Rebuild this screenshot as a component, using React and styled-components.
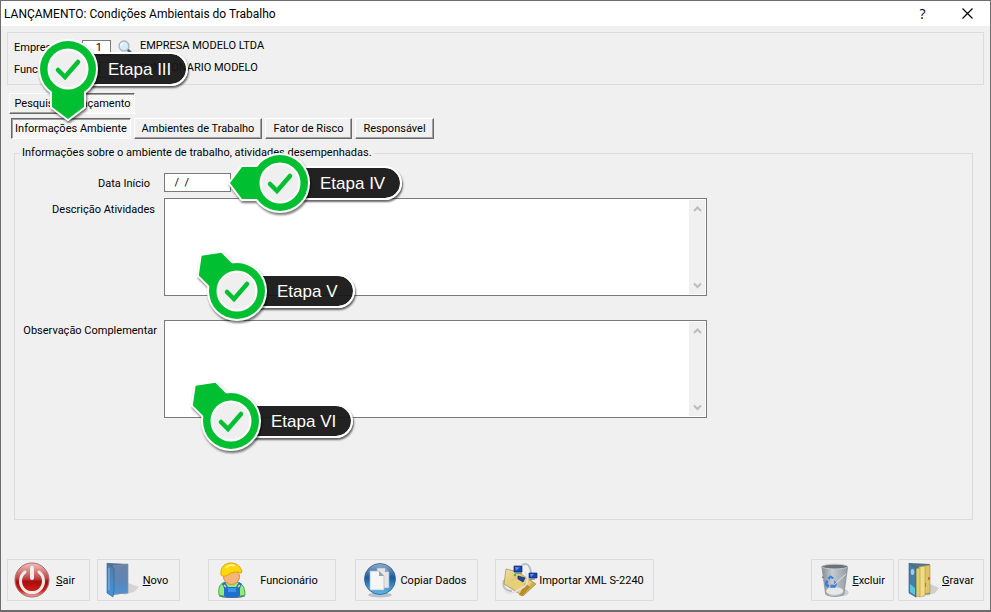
import React from 'react'
import styled, { createGlobalStyle, css } from 'styled-components'

const GlobalStyle = createGlobalStyle`
  * {
    box-sizing: border-box;
  }
  body {
    margin: 0;
    background-color: #6e6c6d;
    color: #000;
    font-family: Tahoma, Roboto, sans-serif;
    font-size: 11px;
    line-height: 14px;
  }
  button, input, textarea {
    font: inherit;
    color: inherit;
  }
`

const Window = styled.div`
  position: relative;
  display: flex;
  flex-direction: column;
  min-height: 100vh;
  border: 1px solid #6e6c6d;
  border-bottom-width: 2px;
  background-color: #f0f0f0;
`

const TitleBar = styled.header`
  display: flex;
  align-items: center;
  justify-content: space-between;
  height: 25px;
  padding-left: 3px;
  background-color: white;
`

const Title = styled.h1`
  margin: 0;
  font-family: "Segoe UI", Roboto, sans-serif;
  font-size: 12px;
  font-weight: 400;
`

const TitleActions = styled.div`
  display: flex;
`

const TitleButton = styled.button`
  display: flex;
  align-items: center;
  justify-content: center;
  width: 45px;
  height: 25px;
  padding: 0;
  border: none;
  background: none;
  font-family: "Segoe UI", "Open Sans", sans-serif;
  font-size: 14px;
`

const Content = styled.main`
  flex: 1;
  display: flex;
  flex-direction: column;
  padding: 6px 6px 0px;
`

const Summary = styled.section`
  display: flex;
  flex-direction: column;
  gap: 5px;
  height: 53px;
  padding: 6px 6px 0px;
  border: 1px solid #dcdcdc;
`

const SummaryRow = styled.div`
  display: flex;
  align-items: center;
  height: 17px;
`

const SummaryLabel = styled.label`
  width: 68px;
`

const SummaryName = styled.span`
  align-self: flex-start;
`

const CodeInput = styled.input`
  width: 29px;
  height: 16px;
  padding: 0px 8px 0px 0px;
  border: 1px solid #7a7a7a;
  background-color: white;
  text-align: right;
`

const SearchButton = styled.button`
  display: flex;
  width: 16px;
  height: 16px;
  margin: 0px 6px 0px 7px;
  padding: 0;
  border: none;
  background: none;
`

const Tabs = styled.nav`
  display: flex;
  align-items: flex-end;
  gap: ${ props => props.$gap };
  margin: ${ props => props.$margin };
`

const selectedTab = css`
  border-color: #696969 white white #696969;
  background: repeating-conic-gradient(#ffffff 0% 25%, #f0f0f0 0% 50%) 0px 0px / 2px 2px;
  box-shadow: inset 1px 1px 0px #a0a0a0;
`

const Tab = styled.button`
  height: 21px;
  width: ${ props => props.$width };
  padding: 0;
  border: 1px solid;
  border-color: white #696969 #696969 white;
  background-color: #f0f0f0;
  box-shadow: inset -1px -1px 0px #a0a0a0;
  white-space: nowrap;
  ${ props => props.$selected && selectedTab }
`

const Group = styled.fieldset`
  flex: 1;
  min-width: 0;
  margin: 7px 11px 0px 7px;
  padding: 13px 0px 0px;
  border: 1px solid #dcdcdc;
`

const Legend = styled.legend`
  margin-left: 5px;
  padding: 0px 2px;
`

const Field = styled.div`
  display: flex;
  align-items: flex-start;
  margin-bottom: ${ props => props.$space || '0px' };
`

const FieldLabel = styled.label`
  width: 149px;
  padding: ${ props => props.$pad || '5px 9px 0px 0px' };
  text-align: right;
  white-space: nowrap;
`

const DateInput = styled.input`
  width: 67px;
  height: 19px;
  padding: 0px 4px;
  border: 1px solid #7a7a7a;
  background-color: white;
  white-space: pre;
`

const MemoBox = styled.div`
  flex: 0 1 543px;
  display: flex;
  height: 98px;
  padding: 1px;
  border: 1px solid #7a7a7a;
  background-color: white;
`

const Memo = styled.textarea`
  flex: 1;
  border: none;
  outline: none;
  resize: none;
  overflow: hidden;
`

const ScrollBar = styled.div`
  display: flex;
  flex-direction: column;
  justify-content: space-between;
  align-items: center;
  width: 16px;
  padding: 5px 0px 4px;
  background-color: #f0f0f0;
`

const Footer = styled.footer`
  display: flex;
  padding: 39px 6px 9px;
`

const ActionButton = styled.button`
  display: flex;
  align-items: center;
  width: ${ props => props.$width };
  height: 42px;
  margin-left: ${ props => props.$before || '0px' };
  padding: 0px 8px 0px 6px;
  border: 1px solid #dcdcdc;
  background-color: #f0f0f0;
  white-space: nowrap;
`

const ActionText = styled.span`
  flex: 1;
  padding-top: 2px;
  text-align: center;
`

const Callout = styled.div`
  position: absolute;
  left: ${ props => props.$x }px;
  top: ${ props => props.$y }px;
  display: flex;
  align-items: center;
`

const Pin = styled.svg`
  position: relative;
  z-index: 1;
  overflow: visible;
  filter: drop-shadow(1px 2px 1px rgba(0, 0, 0, 0.55));
`

const Pill = styled.span`
  height: 34px;
  margin-left: -12px;
  padding: 0px 15px 0px 22px;
  border: 2px solid white;
  border-left: none;
  border-radius: 0px 17px 17px 0px;
  background-color: rgba(22, 22, 22, 0.95);
  background-clip: padding-box;
  box-shadow: 1px 2px 2px rgba(0, 0, 0, 0.6);
  color: white;
  font-family: "Liberation Sans", Arial, sans-serif;
  font-size: 17px;
  line-height: 32px;
  white-space: nowrap;
`

const SearchIcon = () => (
    <svg width="16" height="16" viewBox="0 0 16 16">
        <path d="M10 10l4 4" stroke="#5d6268" strokeWidth="2.6" strokeLinecap="round" />
        <circle cx="6" cy="6" r="5" fill="#d5ecfb" stroke="#a9b4bf" strokeWidth="1.3" />
        <path d="M3 6a3 3 0 0 1 3-3" fill="none" stroke="white" strokeWidth="1.4" />
    </svg>
)

const Chevron = ({ down }) => (
    <svg width="9" height="9" viewBox="0 0 9 9">
        <path d={down ? 'M1 2.500L4.500 6 8 2.500' : 'M1 6L4.500 2.500 8 6'} fill="none" stroke="#bcbcbc" strokeWidth="2" />
    </svg>
)

const PowerIcon = () => (
    <svg width="36" height="36" viewBox="0 0 36 36">
        <defs>
            <linearGradient id="power" x1="0" y1="0" x2="0" y2="1">
                <stop offset="0" stopColor="#efc4c1" />
                <stop offset="0.45" stopColor="#c04545" />
                <stop offset="0.55" stopColor="#a80d0d" />
                <stop offset="0.8" stopColor="#d01a17" />
                <stop offset="1" stopColor="#f2b2ac" />
            </linearGradient>
        </defs>
        <circle cx="18" cy="18" r="17" fill="url(#power)" stroke="#a26a6a" />
        <path d="M11 10a11.500 11.500 0 1 0 14 0" fill="none" stroke="#f1eded" strokeWidth="3" strokeLinecap="round" />
        <path d="M18 6v10" stroke="#f1eded" strokeWidth="4" strokeLinecap="round" />
    </svg>
)

const FolderIcon = () => (
    <svg width="36" height="36" viewBox="0 0 36 36">
        <defs>
            <linearGradient id="folder" x1="0" y1="0" x2="0" y2="1">
                <stop offset="0" stopColor="#6b83a6" />
                <stop offset="0.6" stopColor="#5b86b8" />
                <stop offset="1" stopColor="#4a93d8" />
            </linearGradient>
            <linearGradient id="flap" x1="0" y1="0" x2="0" y2="1">
                <stop offset="0" stopColor="#56799f" />
                <stop offset="1" stopColor="#3f95de" />
            </linearGradient>
        </defs>
        <path d="M20 33l10-3 5-5-11-4z" fill="#d4d4d4" />
        <path d="M4 1l20 1v29l-16 2z" fill="#4d7099" />
        <path d="M9 4l15-2v29l-14 1z" fill="url(#folder)" stroke="#8097b4" strokeWidth="0.7" />
        <path d="M3 1l7 5v23l-1 6-6-4z" fill="url(#flap)" stroke="#315f93" strokeWidth="0.6" />
        <path d="M5 6v22" stroke="#7db4e4" strokeWidth="1.200" />
    </svg>
)

const WorkerIcon = () => (
    <svg width="36" height="36" viewBox="0 0 36 36">
        <ellipse cx="17" cy="34" rx="13" ry="2" fill="#6b7780" />
        <path d="M4 33c-1-8 1-12 7-13h11c5 1 8 5 8 13-6 2-20 2-26 0z" fill="#94ec78" stroke="#3cab52" />
        <path d="M10 20l3 5h8l3-5 3 2-2 4v8c-4 2-12 2-16 0v-8l-2-4z" fill="#1f6fd0" />
        <path d="M13 26h8v4h-8z" fill="#3b92e8" />
        <path d="M9 23l2 2M25 23l-2 2" stroke="#f2e25a" strokeWidth="1.500" />
        <circle cx="16.500" cy="14.500" r="8" fill="#f7b47a" stroke="#d9893e" />
        <path d="M6 13C5 5 10 1 16 1s10 4 11 9l-1 1c-4-2-9-1-13 2-2 1-5 2-7 0z" fill="#ffd70b" stroke="#dca500" />
        <path d="M11 6c2-3 6-4 9-2" fill="none" stroke="#fff27b" strokeWidth="2" />
    </svg>
)

const CopyIcon = () => (
    <svg width="36" height="36" viewBox="0 0 36 36">
        <defs>
            <linearGradient id="copy" x1="0" y1="0" x2="0" y2="1">
                <stop offset="0" stopColor="#8fafce" />
                <stop offset="0.45" stopColor="#1c5a9a" />
                <stop offset="1" stopColor="#58bdf0" />
            </linearGradient>
        </defs>
        <ellipse cx="18" cy="33" rx="12" ry="2.500" fill="#b7c2cb" />
        <circle cx="18" cy="17" r="15.500" fill="url(#copy)" stroke="#2a5f93" strokeWidth="0.8" />
        <path d="M15 6h8l4 4v16H15z" fill="#e3e6e8" stroke="#a2abb2" strokeWidth="0.7" />
        <path d="M8 9h9l5 5v14H8z" fill="#f4f5f5" stroke="#b2b8bc" strokeWidth="0.7" />
        <path d="M17 9v5h5zM23 6v4h4z" fill="#9aa3a9" />
    </svg>
)

const ImportIcon = () => (
    <svg width="36" height="36" viewBox="0 0 36 36">
        <defs>
            <linearGradient id="import" x1="0" y1="0" x2="1" y2="1">
                <stop offset="0" stopColor="#f1e2a4" />
                <stop offset="1" stopColor="#c79c2d" />
            </linearGradient>
        </defs>
        <path d="M20 3c7-4 10 4 9 16M2 18c-2 7 1 11 8 11" fill="none" stroke="#b8c0c4" strokeWidth="2" />
        <path d="M4 7l12 3 18 12-13 12L2 22z" fill="url(#import)" stroke="#9e8a51" strokeWidth="0.7" />
        <path d="M3 21l18-5 9 4-10 13z" fill="#e7cf78" />
        <path d="M17 33l6-12 5 4-8 9z" fill="#b98c25" />
        <path d="M12 4h8v6h-8zM27 11h8v5h-8zM16 14l7 2-2 4-5-3z" fill="#1c45ad" stroke="#10276b" strokeWidth="0.7" />
        <path d="M13 5l5 .5-4 3zM28 12h4l-3 3z" fill="#5d8ff0" />
        <path d="M13 11h7M28 17h5" stroke="#7e878c" strokeWidth="1.500" />
        <path d="M23 10c4 6 3 13-3 16s-12 8-17 3" fill="none" stroke="#dde3e5" strokeWidth="1.800" />
        <circle cx="13" cy="13" r="1.300" fill="#3fbf55" />
    </svg>
)

const TrashIcon = () => (
    <svg width="36" height="36" viewBox="0 0 36 36">
        <defs>
            <linearGradient id="trash" x1="0" y1="0" x2="1" y2="0">
                <stop offset="0" stopColor="#868c91" />
                <stop offset="0.4" stopColor="#c5ccd1" />
                <stop offset="1" stopColor="#959ba0" />
            </linearGradient>
        </defs>
        <ellipse cx="24" cy="31" rx="8" ry="4" fill="#cdcdcd" />
        <path d="M4 4h27l-4 29c-4 3-15 3-19 0z" fill="url(#trash)" stroke="#8a9095" strokeWidth="0.8" />
        <ellipse cx="17.500" cy="4" rx="13.500" ry="2.500" fill="#6b7176" stroke="#c4cacd" />
        <ellipse cx="17.500" cy="29.500" rx="9" ry="4" fill="#e6e9ea" />
        <path d="M10 16l3-3 4 3-2 1-2-1-1 2zM8 18l3 1-1 3 2 2-2 2-3-3zM17 18l3 4-2 4h-5v-3h4z" fill="#3f7cda" />
        <path d="M17 23l12-11" stroke="#e8ecee" strokeWidth="1" />
        <circle cx="5" cy="15" r="0.600" fill="#222" />
    </svg>
)

const BinderIcon = () => (
    <svg width="36" height="36" viewBox="0 0 36 36">
        <path d="M22 34l8-3 4-5-9-4z" fill="#cfcfcf" />
        <path d="M5 1l20 1v30l-14 2z" fill="#557288" />
        <path d="M19 4l6-1v28l-6 1z" fill="#dcc465" stroke="#ad9546" strokeWidth="0.6" />
        <path d="M14 5l6-1v30l-6 1z" fill="#efdc87" stroke="#b39a45" strokeWidth="0.6" />
        <path d="M10 7l5-1v28l-5 1z" fill="#e5cd6c" stroke="#b39a45" strokeWidth="0.6" />
        <path d="M23 15h2v3h-2z" fill="#dc653d" />
        <path d="M20 21h1v4h-1z" fill="#57a852" />
        <path d="M4 1l7 5v29l-7-4z" fill="#4c7ca6" stroke="#31566f" strokeWidth="0.6" />
        <path d="M5 22l5 4v7l-5-3z" fill="#56c8da" />
        <ellipse cx="7.500" cy="10" rx="1.800" ry="3" fill="#a4cae4" />
    </svg>
)

// The arrow points down by default, "turn" rotates it around the badge.
const Step = ({ x, y, turn, children }) => (
    <Callout $x={x} $y={y}>
        <Pin width="60" height="60" viewBox="-30 -30 60 60">
            <g transform={`rotate(${turn})`} fill="#00bf30">
                <g stroke="white" strokeWidth="4" strokeLinejoin="round">
                    <circle r="28" />
                    <path d="M-16 20V38L0 50 16 38V20z" />
                </g>
                <circle r="28" />
                <path d="M-16 20V38L0 50 16 38V20z" />
            </g>
            <circle r="19.500" fill="#efefef" stroke="white" strokeWidth="2" />
            <path d="M-10 1l7 7L10-7" fill="none" stroke="#00bf30" strokeWidth="4.500" strokeLinecap="round" />
        </Pin>
        <Pill>{children}</Pill>
    </Callout>
)

const MemoField = ({ id, label, space, pad }) => (
    <Field $space={space}>
        <FieldLabel htmlFor={id} $pad={pad}>{label}</FieldLabel>
        <MemoBox>
            <Memo id={id} />
            <ScrollBar>
                <Chevron />
                <Chevron down />
            </ScrollBar>
        </MemoBox>
    </Field>
)

const App = () => {
    return (
        <>
            <GlobalStyle />
            <Window>
                <TitleBar>
                    <Title>LANÇAMENTO: Condições Ambientais do Trabalho</Title>
                    <TitleActions>
                        <TitleButton aria-label="Ajuda">?</TitleButton>
                        <TitleButton aria-label="Fechar">
                            <svg width="11" height="11" viewBox="0 0 11 11">
                                <path d="M.5.5l10 10M10.500.5l-10 10" stroke="black" strokeWidth="1.200" />
                            </svg>
                        </TitleButton>
                    </TitleActions>
                </TitleBar>
                <Content>
                    <Summary>
                        <SummaryRow>
                            <SummaryLabel htmlFor="empresa">Empresa</SummaryLabel>
                            <CodeInput id="empresa" defaultValue="1" />
                            <SearchButton aria-label="Pesquisar empresa"><SearchIcon /></SearchButton>
                            <SummaryName>EMPRESA MODELO LTDA</SummaryName>
                        </SummaryRow>
                        <SummaryRow>
                            <SummaryLabel htmlFor="funcionario">Funcionário</SummaryLabel>
                            <CodeInput id="funcionario" defaultValue="1" />
                            <SearchButton aria-label="Pesquisar funcionário"><SearchIcon /></SearchButton>
                            <SummaryName>FUNCIONARIO MODELO</SummaryName>
                        </SummaryRow>
                    </Summary>
                    <Tabs $gap="0px" $margin="8px 0px 0px 2px">
                        <Tab $width="56px">Pesquisa</Tab>
                        <Tab $width="70px" $selected>Lançamento</Tab>
                    </Tabs>
                    <Tabs $gap="3px" $margin="4px 0px 0px 4px">
                        <Tab $width="120px" $selected>Informações Ambiente</Tab>
                        <Tab $width="128px">Ambientes de Trabalho</Tab>
                        <Tab $width="87px">Fator de Risco</Tab>
                        <Tab $width="79px">Responsável</Tab>
                    </Tabs>
                    <Group>
                        <Legend>Informações sobre o ambiente de trabalho, atividades desempenhadas.</Legend>
                        <Field $space="6px">
                            <FieldLabel htmlFor="data" $pad="4px 14px 0px 0px">Data Início</FieldLabel>
                            <DateInput id="data" defaultValue="  /  /" />
                        </Field>
                        <MemoField id="descricao" label="Descrição Atividades" space="24px" />
                        <MemoField id="observacao" label="Observação Complementar" pad="4px 7px 0px 0px" />
                    </Group>
                </Content>
                <Footer>
                    <ActionButton $width="83px"><PowerIcon /><ActionText><u>S</u>air</ActionText></ActionButton>
                    <ActionButton $width="83px" $before="7px"><FolderIcon /><ActionText><u>N</u>ovo</ActionText></ActionButton>
                    <ActionButton $width="128px" $before="28px"><WorkerIcon /><ActionText>Funcionário</ActionText></ActionButton>
                    <ActionButton $width="123px" $before="19px"><CopyIcon /><ActionText>Copiar Dados</ActionText></ActionButton>
                    <ActionButton $width="159px" $before="17px"><ImportIcon /><ActionText>Importar XML S-2240</ActionText></ActionButton>
                    <ActionButton $width="83px" $before="auto"><TrashIcon /><ActionText><u>E</u>xcluir</ActionText></ActionButton>
                    <ActionButton $width="86px" $before="4px"><BinderIcon /><ActionText><u>G</u>ravar</ActionText></ActionButton>
                </Footer>
                <Step x={37} y={38} turn={0}>Etapa III</Step>
                <Step x={249} y={152} turn={90}>Etapa IV</Step>
                <Step x={206} y={260} turn={135}>Etapa V</Step>
                <Step x={200} y={390} turn={135}>Etapa VI</Step>
            </Window>
        </>
    )
}

export default App
